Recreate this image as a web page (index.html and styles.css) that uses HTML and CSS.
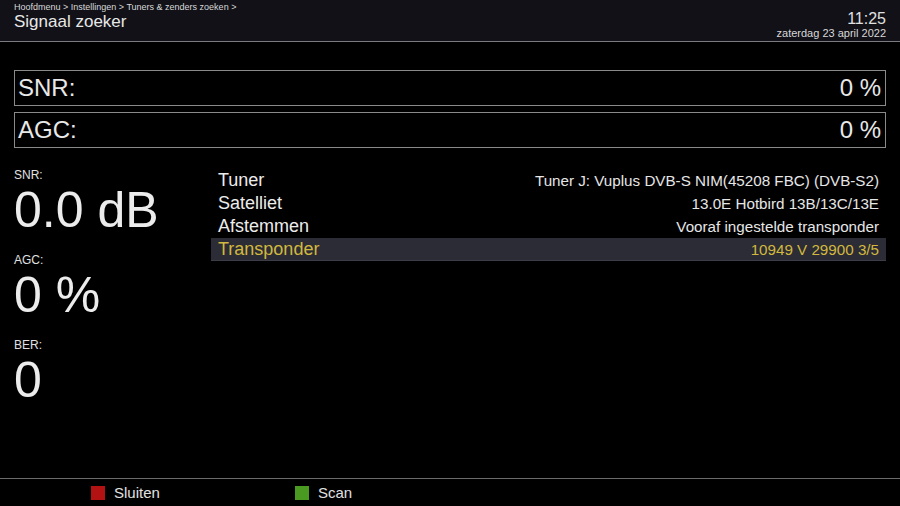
FILE: index.html
```html
<!DOCTYPE html>
<html lang="nl">
<head>
    <meta charset="UTF-8">
    <title>Signaal zoeker</title>
    <link rel="stylesheet" href="styles.css">
</head>
<body>
    <div class="screen">
        <header class="header">
            <div class="header-left">
                <div class="crumbs">Hoofdmenu &gt; Instellingen &gt; Tuners &amp; zenders zoeken &gt;</div>
                <div class="title">Signaal zoeker</div>
            </div>
            <div class="header-right">
                <div class="clock">11:25</div>
                <div class="date">zaterdag 23 april 2022</div>
            </div>
        </header>

        <div class="bars">
            <div class="bar"><span>SNR:</span><span>0 %</span></div>
            <div class="bar"><span>AGC:</span><span>0 %</span></div>
        </div>

        <main class="content">
            <div class="stats">
                <div class="stat">
                    <div class="stat-label">SNR:</div>
                    <div class="stat-value">0.0 dB</div>
                </div>
                <div class="stat">
                    <div class="stat-label">AGC:</div>
                    <div class="stat-value">0 %</div>
                </div>
                <div class="stat">
                    <div class="stat-label">BER:</div>
                    <div class="stat-value">0</div>
                </div>
            </div>
            <ul class="list">
                <li class="row"><span class="key">Tuner</span><span class="val">Tuner J: Vuplus DVB-S NIM(45208 FBC) (DVB-S2)</span></li>
                <li class="row"><span class="key">Satelliet</span><span class="val">13.0E Hotbird 13B/13C/13E</span></li>
                <li class="row"><span class="key">Afstemmen</span><span class="val">Vooraf ingestelde transponder</span></li>
                <li class="row selected"><span class="key">Transponder</span><span class="val">10949 V 29900 3/5</span></li>
            </ul>
        </main>

        <footer class="footer">
            <div class="button"><span class="key-red"></span>Sluiten</div>
            <div class="button"><span class="key-green"></span>Scan</div>
        </footer>
    </div>
</body>
</html>
```

FILE: styles.css
```css
body {
    margin: 0;
    background-color: #000;
    color: #e6e6e6;
    font-family: 'Liberation Sans', Arial, sans-serif;
}
.screen {
    width: 900px;
    height: 506px;
    display: flex;
    flex-direction: column;
    overflow: hidden;
}
.header {
    height: 41px;
    background-color: #111117;
    border-bottom: 1px solid #7a7a80;
    display: flex;
    justify-content: space-between;
    padding: 0 14px;
    flex-shrink: 0;
}
.crumbs {
    font-size: 9px;
    line-height: 10px;
    margin-top: 2px;
    color: #d8d8d8;
}
.title {
    font-size: 17px;
    line-height: 20px;
    color: #e8e8e8;
}
.header-right {
    text-align: right;
    padding-top: 11px;
}
.clock {
    font-size: 16px;
    line-height: 16px;
    color: #e0e0e0;
}
.date {
    font-size: 11px;
    line-height: 13px;
    color: #d8d8d8;
}
.bars {
    padding: 28px 14px 0;
    display: flex;
    flex-direction: column;
    gap: 6px;
}
.bar {
    height: 34px;
    border: 1px solid #8a8a8a;
    display: flex;
    justify-content: space-between;
    align-items: center;
    padding: 0 4px 0 3px;
    font-size: 24px;
    color: #e8e8e8;
}
.content {
    flex: 1;
    display: flex;
    padding: 21px 14px 0;
}
.stats {
    width: 197px;
    display: flex;
    flex-direction: column;
    margin-top: -1px;
}
.stat {
    height: 85px;
}
.stat-label {
    font-size: 12px;
    line-height: 14px;
    color: #e0e0e0;
}
.stat-value {
    font-size: 50px;
    line-height: 50px;
    margin-top: 3px;
    color: #ececec;
}
.list {
    list-style: none;
    margin: 0;
    padding: 0;
    flex: 1;
}
.row {
    height: 23px;
    display: flex;
    justify-content: space-between;
    align-items: center;
    padding: 0 7px;
}
.key {
    font-size: 18px;
    color: #ececec;
}
.val {
    font-size: 15.2px;
    color: #e6e6e6;
}
.selected {
    background-color: #2b2c35;
    border-bottom: 1px solid #3c3d46;
    height: 22px;
}
.selected .key,
.selected .val {
    color: #d2b83e;
}
.footer {
    height: 27px;
    border-top: 1px solid #6a6a6a;
    display: flex;
    align-items: center;
    padding-left: 91px;
    flex-shrink: 0;
    font-size: 15px;
    color: #e0e0e0;
}
.button {
    width: 204px;
    display: flex;
    align-items: center;
    gap: 9px;
}
.key-red,
.key-green {
    width: 14px;
    height: 14px;
}
.key-red {
    background-color: #b31212;
}
.key-green {
    background-color: #4a9a22;
}
```
